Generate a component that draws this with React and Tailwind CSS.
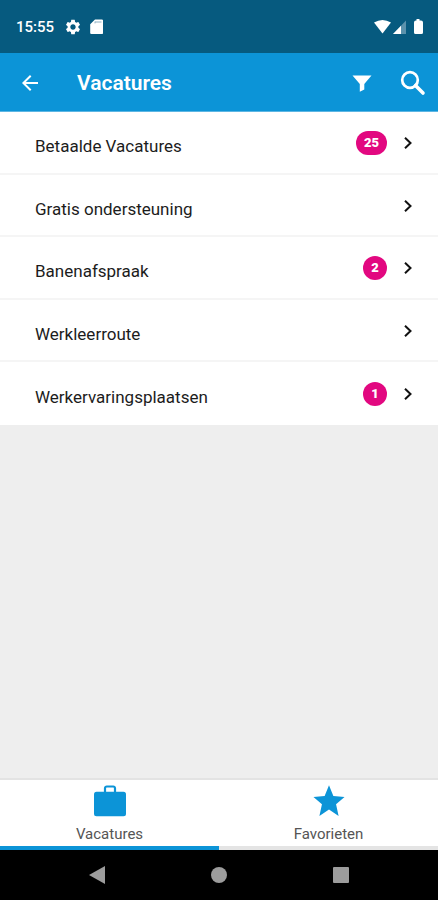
import React, { useState } from 'react';
import { MdArrowBack, MdSettings } from 'react-icons/md';

const categories = [
  { label: 'Betaalde Vacatures', count: 25 },
  { label: 'Gratis ondersteuning' },
  { label: 'Banenafspraak', count: 2 },
  { label: 'Werkleerroute' },
  { label: 'Werkervaringsplaatsen', count: 1 },
];

function BriefcaseIcon() {
  return (
    <svg className="size-8" viewBox="0 0 32 32" aria-hidden="true">
      <path d="M11 8V3.200a1.700 1.700 0 0 1 1.700-1.700h6.600a1.700 1.700 0 0 1 1.700 1.700V8" fill="none" stroke="#0c94d7" strokeWidth="2.200" />
      <rect y="6.800" width="32" height="24.500" rx="2.500" fill="#0c94d7" />
    </svg>
  );
}

function StarIcon() {
  return (
    <svg className="size-8" viewBox="1.700 1.500 20.600 20.600" aria-hidden="true">
      <path d="M12 17.270 18.180 21.400l-1.640-7.430L22 9.240l-7.190-.61L12 1.700 9.190 8.630 2 9.240l5.460 4.730L5.820 21.400z" fill="#0c94d7" />
    </svg>
  );
}

const tabs = [
  { label: 'Vacatures', Icon: BriefcaseIcon },
  { label: 'Favorieten', Icon: StarIcon },
];

function StatusBar() {
  return (
    <div className="flex h-[53px] items-center justify-between bg-[#065a7f] pr-3 pl-4 text-white">
      <div className="flex items-center">
        <span className="text-[15px] leading-5 font-medium">15:55</span>
        <MdSettings className="ml-2.5 size-[18px]" aria-hidden="true" />
        <svg className="ml-2 h-[15px] w-[13px]" viewBox="0 0 13 15" aria-hidden="true">
          <path d="M5 .5h6.500A1.300 1.300 0 0 1 13 2v11.500A1.300 1.300 0 0 1 11.500 15h-10A1.300 1.300 0 0 1 .2 13.500V5.200Z" fill="currentColor" />
          <path d="M5 3h6.500M5 2.600v1.800" stroke="#8fb0c2" strokeWidth="1" fill="none" />
        </svg>
      </div>
      <svg className="h-4 w-[52px]" viewBox="0 0 52 16" aria-hidden="true">
        <path d="M0 3.500Q8.500-1.500 17 3.500L8.500 14.500Z" fill="#fff" />
        <path d="M19 15 32 1.500V15Z" fill="#5b92ac" />
        <path d="M19 15 27 6.700V15Z" fill="#fff" />
        <path d="M42.500 1.500V0h3v1.500H47a2 2 0 0 1 2 2V13.500a1.500 1.500 0 0 1-1.500 1.500h-6a1.500 1.500 0 0 1-1.500-1.500v-10a2 2 0 0 1 2-2Z" fill="#fff" />
      </svg>
    </div>
  );
}

function Header() {
  return (
    <header className="flex h-[59px] items-center border-b border-[#5db6e3] bg-[#0c94d7] pt-0.5 pr-3 pl-[18px] text-white">
      <button type="button" aria-label="Terug">
        <MdArrowBack className="size-6" />
      </button>
      <h1 className="ml-[35px] flex-1 text-[21px] leading-7 font-semibold">Vacatures</h1>
      <button type="button" aria-label="Filter">
        <svg className="h-[17px] w-5" viewBox="0 0 20 17">
          <path d="M.5.500h19L12.300 9v5.500L7.800 16.800V9Z" fill="currentColor" />
        </svg>
      </button>
      <button type="button" aria-label="Zoeken" className="ml-7">
        <svg className="size-[26px]" viewBox="0 0 26 26" fill="none" stroke="currentColor">
          <circle cx="10" cy="10" r="7.800" strokeWidth="2.700" />
          <path d="m15.500 15.500 7.500 7.500" strokeWidth="3.600" strokeLinecap="round" />
        </svg>
      </button>
    </header>
  );
}

export default function App() {
  const [active, setActive] = useState('Vacatures');
  return (
    <div className="flex min-h-screen flex-col bg-[#eeeeee] font-[Roboto,sans-serif]">
      <StatusBar />
      <Header />
      <main className="flex-1">
        <ul className="grid min-h-[313px] auto-rows-fr bg-white">
          {categories.map(({ label, count }) => (
            <li key={label} className="border-b-2 border-[#f5f5f5] last:border-white">
              <button type="button" className="flex h-full w-full items-center pt-0.5 pr-[26px] pl-[35px] text-left">
                <span className="flex-1 pt-1.5 text-[17px] leading-6 text-[#1c1c1c]">{label}</span>
                {count && (
                  <span className="mr-[17px] flex h-6 min-w-6 items-center justify-center rounded-full bg-[#e20880] px-2 text-[13px] leading-4 font-black text-white">
                    {count}
                  </span>
                )}
                <svg className="h-3 w-2" viewBox="0 0 8 12" fill="none" aria-hidden="true">
                  <path d="m1 .8 5.500 5.200L1 11.200" stroke="#111" strokeWidth="2" />
                </svg>
              </button>
            </li>
          ))}
        </ul>
      </main>
      <nav className="flex border-t-2 border-[#e3e3e3] bg-white">
        {tabs.map(({ label, Icon }) => (
          <button
            key={label}
            type="button"
            onClick={() => setActive(label)}
            className={`flex flex-1 flex-col items-center border-b-4 pt-[5px] pb-0.5 ${active === label ? 'border-[#0c94d7]' : 'border-[#e4e4e4]'}`}
          >
            <Icon />
            <span className="mt-[7px] text-[15px] leading-5 text-[#555555]">{label}</span>
          </button>
        ))}
      </nav>
      <div className="flex h-[50px] items-center justify-around bg-black px-9">
        <button type="button" aria-label="Vorige">
          <svg className="size-[18px]" viewBox="0 0 18 18"><path d="M1 9 17 0v18Z" fill="#9c9c9c" /></svg>
        </button>
        <button type="button" aria-label="Startscherm">
          <svg className="size-[18px]" viewBox="0 0 18 18"><circle cx="9" cy="9" r="8" fill="#9c9c9c" /></svg>
        </button>
        <button type="button" aria-label="Recente apps">
          <svg className="size-[18px]" viewBox="0 0 18 18"><rect x="1" y="1" width="16" height="16" rx="1" fill="#9c9c9c" /></svg>
        </button>
      </div>
    </div>
  );
}
